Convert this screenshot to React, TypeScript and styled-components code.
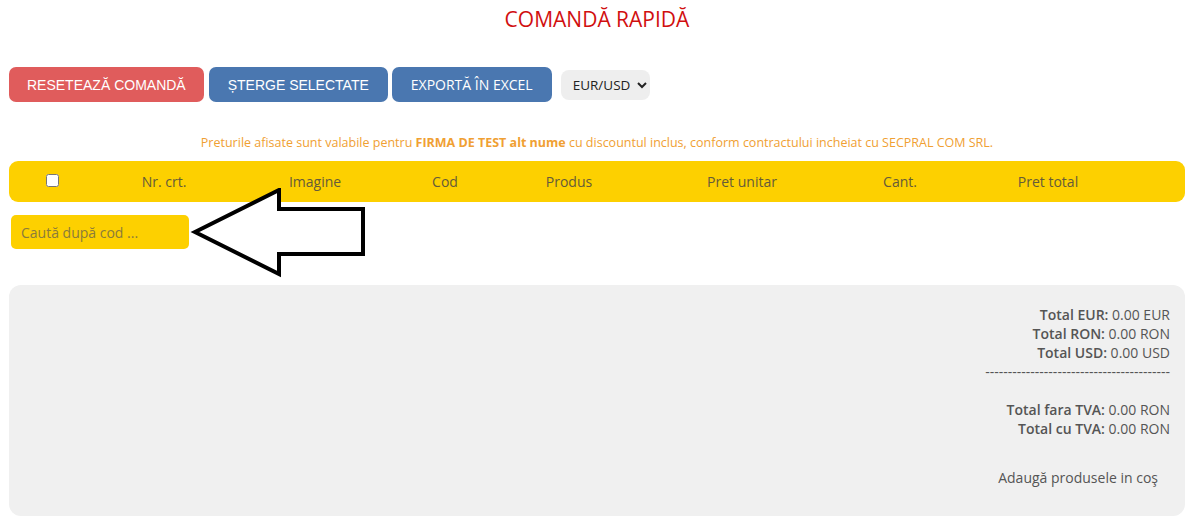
import React, { useState } from "react";
import styled, { createGlobalStyle } from "styled-components";

const GlobalStyle = createGlobalStyle`
  body {
    margin: 0;
    background: #fff;
    font-family: "Open Sans", Arial, sans-serif;
    color: #555;
  }
`;

const Page = styled.div`
  padding: 0 9px;
`;

const Title = styled.h1`
  margin: 0;
  padding-top: 6px;
  text-align: center;
  font-size: 21px;
  font-weight: 400;
  color: #d10f0f;
  line-height: 26px;
`;

const Toolbar = styled.div`
  display: flex;
  align-items: center;
  margin-top: 35px;
`;

const ActionButton = styled.button<{ $variant: "danger" | "primary"; $alt?: boolean }>`
  height: 35px;
  padding: 0 ${(p) => (p.$variant === "danger" ? "18px" : "19px")};
  margin-right: ${(p) => (p.$variant === "danger" ? "5px" : "4px")};
  border: none;
  border-radius: 7px;
  font-family: ${(p) => (p.$alt ? `"Open Sans", Arial, sans-serif` : `"Liberation Sans", Arial, sans-serif`)};
  font-size: 14px;
  color: #fff;
  text-transform: uppercase;
  background: ${(p) => (p.$variant === "danger" ? "#e05c5c" : "#4a77b0")};
  cursor: pointer;
`;

const CurrencySelect = styled.select`
  margin-left: 5px;
  width: 89px;
  height: 30px;
  padding: 0 4px 0 8px;
  border: none;
  border-radius: 8px;
  background: #eee;
  font-family: "Open Sans", Arial, sans-serif;
  font-size: 13.5px;
  color: #222;
`;

const Notice = styled.p`
  margin: 32px 0 0;
  text-align: center;
  font-size: 12.5px;
  color: #f0a033;
  line-height: 18px;

  strong {
    font-weight: 700;
  }
`;

const HeaderBar = styled.div`
  display: grid;
  grid-template-columns: 86px 138px 164px 96px 152px 194px 122px 174px 1fr;
  align-items: center;
  height: 41px;
  margin-top: 9px;
  border-radius: 9px;
  background: #fdd000;
`;

const HeaderCell = styled.div`
  text-align: center;
  font-size: 14px;
  color: #655b3a;
`;

const Check = styled.input`
  margin: 0;
  width: 13px;
  height: 13px;
`;

const SearchRow = styled.div`
  position: relative;
  margin-top: 13px;
  padding-left: 2px;
  height: 35px;
`;

const SearchInput = styled.input`
  width: 178px;
  height: 34px;
  box-sizing: border-box;
  padding: 0 10px;
  border: none;
  border-radius: 5px;
  background: #fdd000;
  font-family: "Open Sans", Arial, sans-serif;
  font-size: 14px;
  color: #333;
  outline: none;

  &::placeholder {
    color: #8a7b3c;
  }
`;

const Pointer = styled.svg`
  position: absolute;
  left: 175px;
  top: -27px;
`;

const SummaryPanel = styled.div`
  margin-top: 35px;
  height: 231px;
  box-sizing: border-box;
  padding: 20px 15px 0 0;
  border-radius: 12px;
  background: #f0f0f0;
  display: flex;
  flex-direction: column;
  align-items: flex-end;
`;

const Totals = styled.div`
  text-align: right;
  font-size: 14px;
  line-height: 19px;
  color: #555;

  b {
    font-weight: 600;
  }
`;

const Spacer = styled.div`
  height: 19px;
`;

const CartButton = styled.button`
  margin-top: 20px;
  margin-right: 12px;
  padding: 10px 0;
  border: none;
  background: transparent;
  font-family: "Open Sans", Arial, sans-serif;
  font-size: 14px;
  color: #555;
  cursor: pointer;
`;

const columns = ["Nr. crt.", "Imagine", "Cod", "Produs", "Pret unitar", "Cant.", "Pret total"];

export default function App() {
  const [currency, setCurrency] = useState("EUR/USD");
  const [code, setCode] = useState("");

  return (
    <>
      <GlobalStyle />
      <Page>
        <Title>COMANDĂ RAPIDĂ</Title>

        <Toolbar>
          <ActionButton $variant="danger">Resetează comandă</ActionButton>
          <ActionButton $variant="primary">Șterge selectate</ActionButton>
          <ActionButton $variant="primary" $alt>
            Exportă în Excel
          </ActionButton>
          <CurrencySelect value={currency} onChange={(e) => setCurrency(e.target.value)}>
            <option>EUR/USD</option>
            <option>RON</option>
          </CurrencySelect>
        </Toolbar>

        <Notice>
          Preturile afisate sunt valabile pentru <strong>FIRMA DE TEST alt nume</strong> cu discountul inclus, conform
          contractului incheiat cu SECPRAL COM SRL.
        </Notice>

        <HeaderBar>
          <HeaderCell>
            <Check type="checkbox" />
          </HeaderCell>
          {columns.map((c) => (
            <HeaderCell key={c}>{c}</HeaderCell>
          ))}
          <HeaderCell />
        </HeaderBar>

        <SearchRow>
          <SearchInput placeholder="Caută după cod ..." value={code} onChange={(e) => setCode(e.target.value)} />
          <Pointer width="190" height="100" viewBox="0 0 190 100">
            <polygon
              points="11,44 95,2 95,21 179,21 179,66 95,66 95,86"
              fill="#fff"
              stroke="#000"
              strokeWidth="4"
              strokeLinejoin="miter"
            />
          </Pointer>
        </SearchRow>

        <SummaryPanel>
          <Totals>
            <div>
              <b>Total EUR:</b> 0.00 EUR
            </div>
            <div>
              <b>Total RON:</b> 0.00 RON
            </div>
            <div>
              <b>Total USD:</b> 0.00 USD
            </div>
            <div>-----------------------------------------</div>
            <Spacer />
            <div>
              <b>Total fara TVA:</b> 0.00 RON
            </div>
            <div>
              <b>Total cu TVA:</b> 0.00 RON
            </div>
          </Totals>
          <CartButton>Adaugă produsele in coş</CartButton>
        </SummaryPanel>
      </Page>
    </>
  );
}
